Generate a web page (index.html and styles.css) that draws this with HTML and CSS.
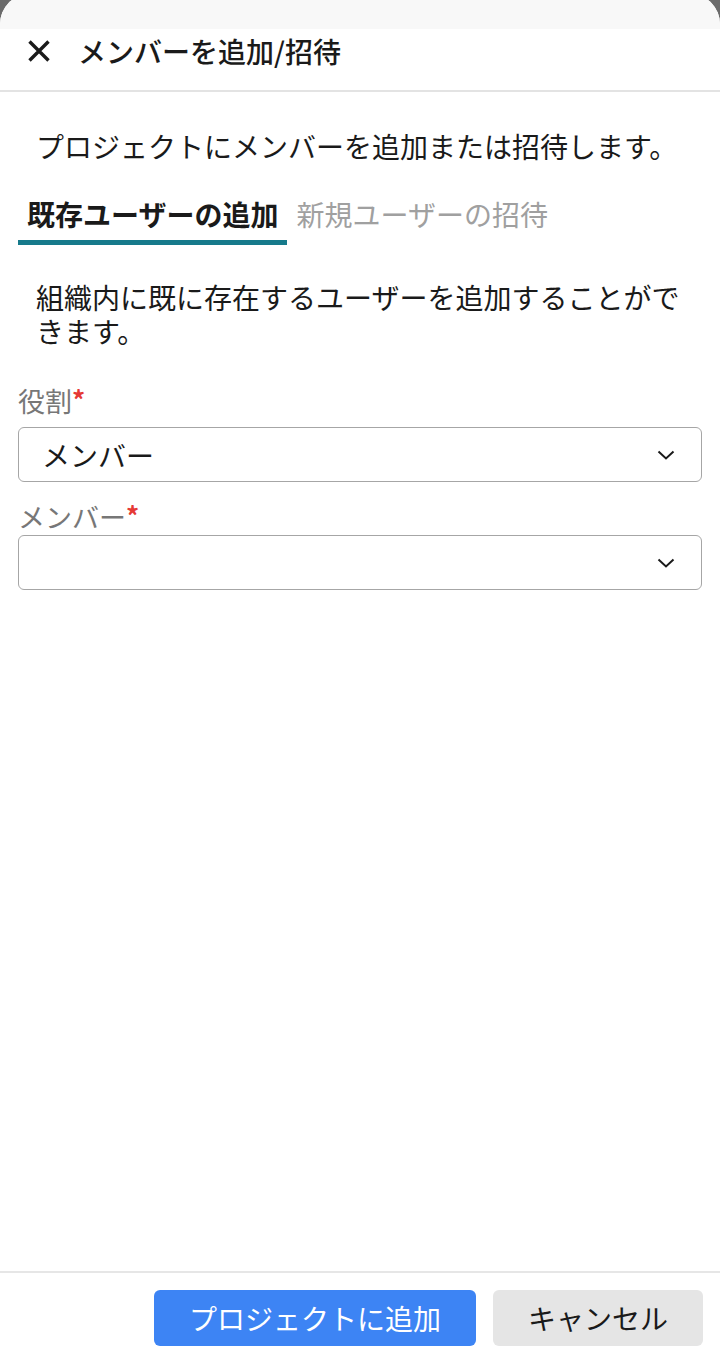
FILE: index.html
```html
<!DOCTYPE html>
<html lang="ja">
<head>
<meta charset="utf-8">
<title>メンバーを追加/招待</title>
<link rel="stylesheet" href="styles.css">
</head>
<body>
<div class="sheet">
  <div class="grabber"></div>
  <header class="header">
    <button class="close" aria-label="閉じる">
      <svg width="24" height="24" viewBox="0 0 24 24"><path d="M2.5 2.5 L21.5 21.5 M21.5 2.5 L2.5 21.5" stroke="#1a1a1a" stroke-width="3.4" stroke-linecap="butt" fill="none"/></svg>
    </button>
    <h1 class="title">メンバーを追加/招待</h1>
  </header>
  <main class="content">
    <p class="desc">プロジェクトにメンバーを追加または招待します。</p>
    <div class="tabs">
      <div class="tab tab-active">既存ユーザーの追加</div>
      <div class="tab">新規ユーザーの招待</div>
    </div>
    <p class="note">組織内に既に存在するユーザーを追加することができます。</p>
    <div class="field field-role">
      <div class="label">役割<span class="req">*</span></div>
      <div class="select">
        <span class="select-value">メンバー</span>
        <svg class="chev" width="18" height="10" viewBox="0 0 18 10"><polyline points="1.5,1.5 9,8.5 16.5,1.5" fill="none" stroke="#1a1a1a" stroke-width="2"/></svg>
      </div>
    </div>
    <div class="field field-member">
      <div class="label">メンバー<span class="req">*</span></div>
      <div class="select">
        <span class="select-value"></span>
        <svg class="chev" width="18" height="10" viewBox="0 0 18 10"><polyline points="1.5,1.5 9,8.5 16.5,1.5" fill="none" stroke="#1a1a1a" stroke-width="2"/></svg>
      </div>
    </div>
  </main>
  <footer class="footer">
    <button class="btn btn-primary">プロジェクトに追加</button>
    <button class="btn btn-secondary">キャンセル</button>
  </footer>
</div>
</body>
</html>
```
FILE: styles.css
```css
html, body {
  margin: 0;
  padding: 0;
}
body {
  background: #6b6b6b;
  font-family: "Noto Sans CJK JP", "Noto Sans", sans-serif;
  color: #1a1a1a;
  overflow: hidden;
}
.sheet {
  margin-top: -6px;
  height: 1374px;
  background: #ffffff;
  border-radius: 30px 30px 0 0;
  display: flex;
  flex-direction: column;
  overflow: hidden;
}
.grabber {
  flex: none;
  height: 35px;
  background: #f8f8f8;
}
.header {
  flex: none;
  box-sizing: border-box;
  height: 63px;
  border-bottom: 2px solid #e3e3e3;
  display: flex;
  align-items: flex-start;
  padding: 5px 0 0 27px;
  gap: 27px;
}
.close {
  border: 0;
  background: none;
  padding: 0;
  margin-top: 5px;
  width: 24px;
  height: 24px;
  display: block;
}
.close svg {
  display: block;
}
.title {
  margin: 0;
  font-size: 28px;
  line-height: 34px;
  font-weight: 500;
  color: #1a1a1a;
}
.content {
  flex: 1;
  padding: 37px 18px 0;
}
.desc {
  margin: 0 0 34px;
  padding: 0 18px;
  font-size: 28px;
  line-height: 34px;
  color: #1a1a1a;
}
.tabs {
  display: flex;
}
.tab {
  padding: 0 9px 9px;
  font-size: 28px;
  line-height: 34px;
  color: #a0a0a0;
  border-bottom: 5px solid transparent;
}
.tab-active {
  color: #1a1a1a;
  font-weight: 700;
  border-bottom-color: #167a8b;
}
.note {
  margin: 35px 0 0;
  padding: 0 18px;
  font-size: 28px;
  line-height: 34px;
  color: #1a1a1a;
}
.field-role {
  margin-top: 36px;
}
.field-member {
  margin-top: 18px;
}
.label {
  font-size: 27px;
  line-height: 34px;
  color: #777777;
}
.field-role .label {
  margin-bottom: 9px;
}
.field-member .label {
  margin-bottom: 1px;
}
.req {
  color: #e53935;
  font-size: 26px;
  font-weight: 700;
  vertical-align: top;
  line-height: 30px;
}
.select {
  box-sizing: border-box;
  height: 55px;
  border: 1.5px solid #a6a6a6;
  border-radius: 6px;
  display: flex;
  align-items: center;
  justify-content: space-between;
  padding: 0 26px 0 23px;
}
.select-value {
  font-size: 28px;
  line-height: 34px;
  color: #1a1a1a;
}
.chev {
  display: block;
}
.footer {
  flex: none;
  border-top: 2px solid #e6e6e6;
  padding: 17px 17px 22px;
  display: flex;
  justify-content: flex-end;
  gap: 17px;
}
.btn {
  height: 56px;
  border: 0;
  border-radius: 6px;
  padding: 0 35px;
  font-family: "Noto Sans CJK JP", "Noto Sans", sans-serif;
  font-size: 28px;
  line-height: 34px;
}
.btn-primary {
  background: #3d84f4;
  color: #ffffff;
  width: 322px;
}
.btn-secondary {
  background: #e5e5e5;
  color: #1a1a1a;
  width: 210px;
}
```
